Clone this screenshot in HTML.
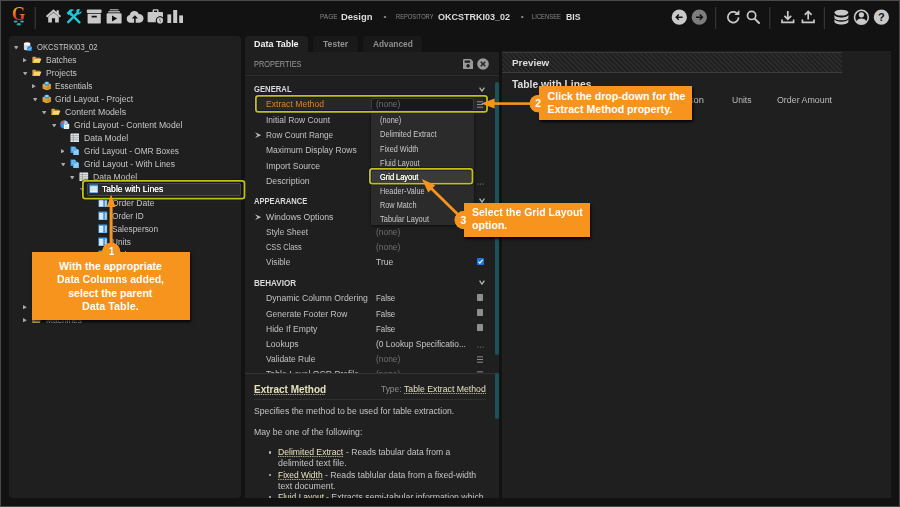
<!DOCTYPE html>
<html lang="en">
<head>
<meta charset="utf-8">
<title>Design - Data Table Extract Method</title>
<style>
*{box-sizing:border-box;margin:0;padding:0}
html,body{width:900px;height:507px;overflow:hidden;background:#121212}
body{position:relative;font-family:"Liberation Sans",sans-serif;color:#c4c4c4;font-size:9px}
.abs{position:absolute}
.t{position:absolute;white-space:nowrap;transform-origin:0 50%}
#frame{position:absolute;left:0;top:0;width:900px;height:507px;border:1px solid #4a4a4a;z-index:50;pointer-events:none}
.panel{position:absolute;background:#1f1f1f}
.ic{position:absolute}
.tb-s{font-size:6.4px;line-height:10px;color:#8a8a8a;white-space:nowrap}
.tb-b{font-size:9.6px;line-height:12px;font-weight:bold;color:#dcdcdc;white-space:nowrap}
.tb-d{font-size:10px;line-height:12px;color:#888}
.callout{position:absolute;background:#f7941d;box-shadow:1px 2px 2.5px rgba(0,0,0,.85)}
.ul{border-bottom:1px dotted #cfcba6}
</style>
</head>
<body>
<div id="topbar" class="abs" style="left:0;top:0;width:900px;height:35px;background:#121212">
<svg class="abs" style="left:0;top:0" width="900" height="35" viewBox="0 0 900 35">
<!-- logo drops -->
<g fill="#12b5a6">
<ellipse cx="15.6" cy="21.6" rx="2" ry="1.1"/><ellipse cx="22" cy="21.6" rx="2" ry="1.1"/><ellipse cx="18.8" cy="24.2" rx="2" ry="1.2"/>
</g>
<rect x="34.6" y="7" width="1.3" height="22" fill="#3a3630"/>
<!-- home -->
<g fill="#c9c9c9">
<path d="M53.5 9.2 L45.9 15.9 L47.2 17.4 L53.5 11.9 L59.8 17.4 L61.1 15.9 L58.8 13.9 V10.2 H56.6 V11.9 Z"/>
<path d="M48.2 16.8 L53.5 12.4 L58.8 16.8 V22.6 H55.1 V18.2 H51.9 V22.6 H48.2 Z"/>
</g>
<!-- tools -->
<g stroke="#21c6d6" stroke-width="2.4" stroke-linecap="round" fill="none">
<path d="M68.2 22.2 L78.2 12.2"/>
<path d="M79.4 22.3 L71.5 14.4"/>
</g>
<g fill="#21c6d6">
<path d="M76.2 10.2 a3.2 3.2 0 0 1 4.2 -0.6 l-2.2 2.2 l1.2 1.2 l2.2 -2.2 a3.2 3.2 0 0 1 -4.4 3.4 Z"/>
<path d="M66.6 13 l3.4 -3.4 q2.6 -0.8 4.4 0.8 l-2.2 0.4 l-0.8 1.6 l1.6 1.6 l-2 2 l-1.6 -1.6 l-0.8 0.8 Z"/>
</g>
<!-- archive -->
<g fill="#c9c9c9">
<rect x="86.8" y="9.6" width="14.8" height="3.4" rx="1"/>
<path d="M87.6 13.8 H100.8 V22.4 a1.2 1.2 0 0 1 -1.2 1.2 H88.8 a1.2 1.2 0 0 1 -1.2 -1.2 Z M91.6 15.8 V17.4 H96.8 V15.8 Z" fill-rule="evenodd"/>
</g>
<!-- play box -->
<g fill="#c9c9c9">
<rect x="109.6" y="9" width="9" height="1.4" rx=".5" fill="#8e8e8e"/>
<rect x="108.2" y="11" width="11.8" height="1.6" rx=".5" fill="#a9a9a9"/>
<path d="M107.8 13.2 H120.4 a1.2 1.2 0 0 1 1.2 1.2 V22.4 a1.2 1.2 0 0 1 -1.2 1.2 H107.8 a1.2 1.2 0 0 1 -1.2 -1.2 V14.4 a1.2 1.2 0 0 1 1.2 -1.2 Z M112 15.4 V21.6 L117.2 18.5 Z" fill-rule="evenodd"/>
</g>
<!-- cloud upload -->
<path fill="#c9c9c9" fill-rule="evenodd" d="M130.4 22.8 a3.9 3.9 0 0 1 -0.6 -7.7 a4.6 4.6 0 0 1 8.9 -1.1 a4.2 4.2 0 0 1 0.8 8.8 Z M134.1 22.8 V18.6 H131.8 L134.9 15.2 L138 18.6 H135.7 V22.8 Z"/>
<!-- briefcase clock -->
<g fill="#c9c9c9">
<path fill-rule="evenodd" d="M152.6 12 V10.4 a1.2 1.2 0 0 1 1.2 -1.2 H157.4 a1.2 1.2 0 0 1 1.2 1.2 V12 H162 a1 1 0 0 1 1 1 V17.4 a4.4 4.4 0 0 0 -7 4.8 H148.6 a1 1 0 0 1 -1 -1 V13 a1 1 0 0 1 1 -1 Z M154 12 H157.2 V10.6 H154 Z"/>
<circle cx="160" cy="20.4" r="3.9" fill="#121212"/><circle cx="160" cy="20.4" r="3.1"/>
</g>
<path d="M159.8 18.6 V20.6 L161 21.6" stroke="#444" stroke-width=".8" fill="none"/>
<!-- bars -->
<g fill="#c9c9c9">
<rect x="167.4" y="14.4" width="3.8" height="8.6"/><rect x="173.2" y="10" width="4" height="13"/><rect x="179.2" y="15.4" width="3.8" height="7.6"/>
</g>
<!-- right icons -->
<circle cx="679.3" cy="17.2" r="7.6" fill="#c9c9c9"/>
<path d="M682.6 17.2 H676.4 M678.8 14.6 L676.2 17.2 L678.8 19.8" stroke="#121212" stroke-width="1.4" fill="none"/>
<circle cx="699.3" cy="17.2" r="7.6" fill="#7d7d7d"/>
<path d="M696 17.2 H702.2 M699.8 14.6 L702.4 17.2 L699.8 19.8" stroke="#121212" stroke-width="1.4" fill="none"/>
<rect x="715" y="7" width="1.2" height="22" fill="#353535"/>
<!-- refresh -->
<path d="M738.6 17.4 a5.4 5.4 0 1 1 -2 -4.4" stroke="#c9c9c9" stroke-width="1.7" fill="none"/>
<path d="M734.4 15 H739.4 V10 Z" fill="#c9c9c9"/>
<!-- search -->
<circle cx="751.6" cy="15.4" r="4.1" stroke="#c9c9c9" stroke-width="1.7" fill="none"/>
<path d="M754.6 18.6 L759 23" stroke="#c9c9c9" stroke-width="2" stroke-linecap="round"/>
<rect x="769.2" y="7" width="1.2" height="22" fill="#353535"/>
<!-- download -->
<g stroke="#c9c9c9" stroke-width="1.7" fill="none">
<path d="M787.8 11 V19 M784.4 15.8 L787.8 19.2 L791.2 15.8"/>
<path d="M782 19.4 V22.4 H793.6 V19.4"/>
<path d="M808.2 19.4 V11.6 M804.8 14.8 L808.2 11.4 L811.6 14.8"/>
<path d="M802.4 19.4 V22.4 H814 V19.4"/>
</g>
<rect x="823.8" y="7" width="1.2" height="22" fill="#353535"/>
<!-- database -->
<g fill="#c9c9c9">
<ellipse cx="841.4" cy="12.6" rx="7" ry="2.9"/>
<path d="M834.4 14.6 c0 3.9 14 3.9 14 0 v2.8 c0 3.9 -14 3.9 -14 0 Z"/>
<path d="M834.4 18.8 c0 3.9 14 3.9 14 0 v2.8 c0 3.9 -14 3.9 -14 0 Z"/>
</g>
<!-- user -->
<circle cx="861.4" cy="17.2" r="6.9" stroke="#c9c9c9" stroke-width="1.6" fill="none"/>
<circle cx="861.4" cy="14.8" r="2.6" fill="#c9c9c9"/>
<path d="M856.4 21.6 a5.2 4.4 0 0 1 10 0 a6.6 6.6 0 0 1 -10 0 Z" fill="#c9c9c9"/>
<!-- help -->
<circle cx="881.4" cy="17.2" r="7.6" fill="#c9c9c9"/>
</svg>
<div class="abs" style="left:12px;top:5.2px;width:15px;font-family:'Liberation Serif',serif;font-size:18px;line-height:18px;font-weight:bold;color:#ef5a22;background:linear-gradient(#f0a010 22%,#f06a1e 50%,#e8202a 82%);-webkit-background-clip:text;background-clip:text;-webkit-text-fill-color:transparent;transform:scaleX(.95);transform-origin:0 50%">G</div>
<div class="abs" style="left:877.4px;top:11px;width:8px;text-align:center;font-size:11px;line-height:12px;font-weight:bold;color:#121212">?</div>

<span class="t" style="left:320.0px;top:12.1px;font-size:6.4px;line-height:10px;color:#8a8a8a;transform:scaleX(1.013);">PAGE</span>
<span class="t" style="left:341.0px;top:11.0px;font-size:9.6px;line-height:12px;font-weight:bold;color:#dcdcdc;transform:scaleX(0.985);">Design</span>
<span class="t" style="left:383.3px;top:10.5px;font-size:12px;line-height:12px;font-weight:bold;color:#999;">·</span>
<span class="t" style="left:396.0px;top:12.1px;font-size:6.4px;line-height:10px;color:#8a8a8a;transform:scaleX(0.900);">REPOSITORY</span>
<span class="t" style="left:438.0px;top:11.0px;font-size:9.6px;line-height:12px;font-weight:bold;color:#dcdcdc;transform:scaleX(0.938);">OKCSTRKI03_02</span>
<span class="t" style="left:520.6px;top:10.5px;font-size:12px;line-height:12px;font-weight:bold;color:#999;">·</span>
<span class="t" style="left:532.0px;top:12.1px;font-size:6.4px;line-height:10px;color:#8a8a8a;transform:scaleX(0.917);">LICENSEE</span>
<span class="t" style="left:566.0px;top:11.0px;font-size:9.6px;line-height:12px;font-weight:bold;color:#dcdcdc;transform:scaleX(0.907);">BIS</span>
</div>
<div id="tree" class="panel" style="left:9.3px;top:35.5px;width:231.4px;height:462px;border-radius:4px">
<div class="abs" style="left:77.4px;top:147.5px;width:154px;height:12.6px;background:#2c2c2c;border:1px solid #484848;border-radius:2px"></div>
<svg class="ic" style="left:4.8px;top:10.0px" width="4.4" height="3.6" viewBox="0 0 44 36"><path d="M0 0 H44 L22 36 Z" fill="#a9a9a9"/></svg>
<svg class="ic" style="left:13.5px;top:6.3px" width="9.6" height="9.6" viewBox="0 0 10 10"><path d="M1 1.6 C1 0.2 7.6 0.2 7.6 1.6 V7.6 C7.6 9 1 9 1 7.6 Z" fill="#e4e7ec"/><ellipse cx="4.3" cy="1.7" rx="3.3" ry="1.1" fill="#f8f9fb"/><path d="M1 3.6 C1 4.9 7.6 4.9 7.6 3.6 M1 5.6 C1 6.9 7.6 6.9 7.6 5.6" stroke="#aab0bb" stroke-width=".5" fill="none"/><circle cx="6.9" cy="6.9" r="2.7" fill="#2b8fe6"/><path d="M5.7 6.9 L6.6 7.9 L8.3 5.9" stroke="#cfe6fb" stroke-width=".8" fill="none"/></svg>
<span class="t" style="left:27.3px;top:5.1px;font-size:9.7px;line-height:12px;color:#c6c6c6;transform:scaleX(0.790);">OKCSTRKI03_02</span>
<svg class="ic" style="left:13.7px;top:22.4px" width="3.8" height="4.4" viewBox="0 0 38 44"><path d="M0 0 V44 L38 22 Z" fill="#a9a9a9"/></svg>
<svg class="ic" style="left:22.9px;top:19.3px" width="9.6" height="9.6" viewBox="0 0 10 10"><path d="M0.4 2.4 a.6 .6 0 0 1 .6 -.6 H3.6 L4.5 2.8 H8.2 a.6 .6 0 0 1 .6 .6 V4 H2.6 L0.4 8 Z" fill="#e2a72c"/><path d="M2.4 4 H9.8 L8 8.4 H0.5 Z" fill="#f9d673"/><path d="M0.5 8.4 H8 L8.3 7.6 H0.9 Z" fill="#eab73e"/></svg>
<span class="t" style="left:36.7px;top:18.1px;font-size:9.7px;line-height:12px;color:#c6c6c6;transform:scaleX(0.874);">Batches</span>
<svg class="ic" style="left:14.2px;top:36.0px" width="4.4" height="3.6" viewBox="0 0 44 36"><path d="M0 0 H44 L22 36 Z" fill="#a9a9a9"/></svg>
<svg class="ic" style="left:22.9px;top:32.3px" width="9.6" height="9.6" viewBox="0 0 10 10"><path d="M0.4 2.4 a.6 .6 0 0 1 .6 -.6 H3.6 L4.5 2.8 H8.2 a.6 .6 0 0 1 .6 .6 V4 H2.6 L0.4 8 Z" fill="#e2a72c"/><path d="M2.4 4 H9.8 L8 8.4 H0.5 Z" fill="#f9d673"/><path d="M0.5 8.4 H8 L8.3 7.6 H0.9 Z" fill="#eab73e"/></svg>
<span class="t" style="left:36.7px;top:31.1px;font-size:9.7px;line-height:12px;color:#c6c6c6;transform:scaleX(0.883);">Projects</span>
<svg class="ic" style="left:23.1px;top:48.4px" width="3.8" height="4.4" viewBox="0 0 38 44"><path d="M0 0 V44 L38 22 Z" fill="#a9a9a9"/></svg>
<svg class="ic" style="left:32.3px;top:45.3px" width="9.6" height="9.6" viewBox="0 0 10 10"><path d="M0.6 3.4 L5 1.8 L9.4 3.4 V7.8 L5 9.8 L0.6 7.8 Z" fill="#eaa832"/><path d="M5 5.2 V9.8 L9.4 7.8 V3.4 Z" fill="#d99624"/><path d="M0.6 5.4 L5 7.2 L9.4 5.4 V6.3 L5 8.1 L0.6 6.3 Z" fill="#c07d14" opacity=".6"/><ellipse cx="5" cy="2.7" rx="2.7" ry="2.3" fill="#2f97e6"/><ellipse cx="5" cy="2.2" rx="1.6" ry="1.1" fill="#8fd3fa"/></svg>
<span class="t" style="left:46.1px;top:44.1px;font-size:9.7px;line-height:12px;color:#c6c6c6;transform:scaleX(0.845);">Essentials</span>
<svg class="ic" style="left:23.6px;top:62.0px" width="4.4" height="3.6" viewBox="0 0 44 36"><path d="M0 0 H44 L22 36 Z" fill="#a9a9a9"/></svg>
<svg class="ic" style="left:32.3px;top:58.3px" width="9.6" height="9.6" viewBox="0 0 10 10"><path d="M0.6 3.4 L5 1.8 L9.4 3.4 V7.8 L5 9.8 L0.6 7.8 Z" fill="#eaa832"/><path d="M5 5.2 V9.8 L9.4 7.8 V3.4 Z" fill="#d99624"/><path d="M0.6 5.4 L5 7.2 L9.4 5.4 V6.3 L5 8.1 L0.6 6.3 Z" fill="#c07d14" opacity=".6"/><ellipse cx="5" cy="2.7" rx="2.7" ry="2.3" fill="#2f97e6"/><ellipse cx="5" cy="2.2" rx="1.6" ry="1.1" fill="#8fd3fa"/></svg>
<span class="t" style="left:46.1px;top:57.1px;font-size:9.7px;line-height:12px;color:#c6c6c6;transform:scaleX(0.878);">Grid Layout - Project</span>
<svg class="ic" style="left:33.0px;top:75.0px" width="4.4" height="3.6" viewBox="0 0 44 36"><path d="M0 0 H44 L22 36 Z" fill="#a9a9a9"/></svg>
<svg class="ic" style="left:41.7px;top:71.3px" width="9.6" height="9.6" viewBox="0 0 10 10"><path d="M0.4 2.4 a.6 .6 0 0 1 .6 -.6 H3.6 L4.5 2.8 H8.2 a.6 .6 0 0 1 .6 .6 V4 H2.6 L0.4 8 Z" fill="#e2a72c"/><path d="M2.4 4 H9.8 L8 8.4 H0.5 Z" fill="#f9d673"/><path d="M0.5 8.4 H8 L8.3 7.6 H0.9 Z" fill="#eab73e"/></svg>
<span class="t" style="left:55.5px;top:70.1px;font-size:9.7px;line-height:12px;color:#c6c6c6;transform:scaleX(0.899);">Content Models</span>
<svg class="ic" style="left:42.4px;top:88.0px" width="4.4" height="3.6" viewBox="0 0 44 36"><path d="M0 0 H44 L22 36 Z" fill="#a9a9a9"/></svg>
<svg class="ic" style="left:51.1px;top:84.3px" width="9.6" height="9.6" viewBox="0 0 10 10"><circle cx="4.4" cy="4.6" r="4.2" fill="#2d8fe0"/><path d="M4.4 4.6 L4.4 0.4 A4.2 4.2 0 0 1 8.4 3.4 Z" fill="#9fd3f6"/><path d="M4.4 4.6 L1 2.2 A4.2 4.2 0 0 1 4.2 0.4 Z" fill="#e8534a"/><rect x="4" y="4" width="5.6" height="5.4" rx=".8" fill="#f2f4f7"/><path d="M4 5.6 L6 4 L8 4.8 Z" fill="#7ac17a"/><path d="M5 7 H8.6 M5 8.2 H8.6" stroke="#c3c9d2" stroke-width=".5"/></svg>
<span class="t" style="left:64.9px;top:83.1px;font-size:9.7px;line-height:12px;color:#c6c6c6;transform:scaleX(0.891);">Grid Layout - Content Model</span>

<svg class="ic" style="left:60.5px;top:97.3px" width="9.6" height="9.6" viewBox="0 0 10 10"><rect x="0.5" y="0.5" width="9" height="9" rx=".5" fill="#eceef1"/><path d="M0.5 2.8 H9.5 M0.5 5 H9.5 M0.5 7.2 H9.5 M3.4 0.5 V9.5" stroke="#858b93" stroke-width=".75"/><path d="M6.4 0.5 V9.5" stroke="#b4b9c0" stroke-width=".5"/></svg>
<span class="t" style="left:74.3px;top:96.1px;font-size:9.7px;line-height:12px;color:#c6c6c6;transform:scaleX(0.890);">Data Model</span>
<svg class="ic" style="left:51.3px;top:113.4px" width="3.8" height="4.4" viewBox="0 0 38 44"><path d="M0 0 V44 L38 22 Z" fill="#a9a9a9"/></svg>
<svg class="ic" style="left:60.5px;top:110.3px" width="9.6" height="9.6" viewBox="0 0 10 10"><path d="M0.6 0.4 H5.2 L6.8 2 V7.2 H0.6 Z" fill="#3b9be6"/><path d="M1.6 1.8 H5 M1.6 3.2 H5.6 M1.6 4.6 H5.6" stroke="#bfe1fa" stroke-width=".6"/><path d="M3.2 3 H7.8 L9.6 4.8 V9.8 H3.2 Z" fill="#5fb4f0"/><path d="M7.8 3 V4.8 H9.6 Z" fill="#d6ecfc"/><path d="M4.2 5.6 H8.4 M4.2 7 H8.4 M4.2 8.4 H8.4" stroke="#d9effd" stroke-width=".6"/></svg>
<span class="t" style="left:74.3px;top:109.1px;font-size:9.7px;line-height:12px;color:#c6c6c6;transform:scaleX(0.856);">Grid Layout - OMR Boxes</span>
<svg class="ic" style="left:51.8px;top:127.0px" width="4.4" height="3.6" viewBox="0 0 44 36"><path d="M0 0 H44 L22 36 Z" fill="#a9a9a9"/></svg>
<svg class="ic" style="left:60.5px;top:123.3px" width="9.6" height="9.6" viewBox="0 0 10 10"><path d="M0.6 0.4 H5.2 L6.8 2 V7.2 H0.6 Z" fill="#3b9be6"/><path d="M1.6 1.8 H5 M1.6 3.2 H5.6 M1.6 4.6 H5.6" stroke="#bfe1fa" stroke-width=".6"/><path d="M3.2 3 H7.8 L9.6 4.8 V9.8 H3.2 Z" fill="#5fb4f0"/><path d="M7.8 3 V4.8 H9.6 Z" fill="#d6ecfc"/><path d="M4.2 5.6 H8.4 M4.2 7 H8.4 M4.2 8.4 H8.4" stroke="#d9effd" stroke-width=".6"/></svg>
<span class="t" style="left:74.3px;top:122.1px;font-size:9.7px;line-height:12px;color:#c6c6c6;transform:scaleX(0.876);">Grid Layout - With Lines</span>
<svg class="ic" style="left:61.2px;top:140.0px" width="4.4" height="3.6" viewBox="0 0 44 36"><path d="M0 0 H44 L22 36 Z" fill="#a9a9a9"/></svg>
<svg class="ic" style="left:69.9px;top:136.3px" width="9.6" height="9.6" viewBox="0 0 10 10"><rect x="0.5" y="0.5" width="9" height="9" rx=".5" fill="#eceef1"/><path d="M0.5 2.8 H9.5 M0.5 5 H9.5 M0.5 7.2 H9.5 M3.4 0.5 V9.5" stroke="#858b93" stroke-width=".75"/><path d="M6.4 0.5 V9.5" stroke="#b4b9c0" stroke-width=".5"/></svg>
<span class="t" style="left:83.7px;top:135.1px;font-size:9.7px;line-height:12px;color:#c6c6c6;transform:scaleX(0.890);">Data Model</span>
<svg class="ic" style="left:70.6px;top:152.5px" width="4.4" height="3.6" viewBox="0 0 44 36"><path d="M0 0 H44 L22 36 Z" fill="#a9a9a9"/></svg>
<svg class="ic" style="left:79.3px;top:148.8px" width="9.6" height="9.6" viewBox="0 0 10 10"><rect x="0.4" y="0.6" width="9.2" height="8.8" rx=".6" fill="#3f9ee6"/><rect x="1.2" y="2.4" width="7.6" height="6.2" fill="#f3f6ee"/><path d="M1.2 4.3 H8.8 M1.2 6.3 H8.8" stroke="#9cc7e6" stroke-width=".6"/><path d="M3.4 2.4 V8.6" stroke="#c5dced" stroke-width=".5"/></svg>
<span class="t" style="left:93.1px;top:147.6px;font-size:9.7px;line-height:12px;color:#ffffff;transform:scaleX(0.889);text-shadow:0 0 .5px #fff;">Table with Lines</span>

<svg class="ic" style="left:88.7px;top:162.3px" width="9.6" height="9.6" viewBox="0 0 10 10"><rect x="0.4" y="0.6" width="9.2" height="9" rx=".6" fill="#3f9ee6"/><rect x="1.2" y="2" width="7.6" height="6.8" fill="#f2f5f8"/><rect x="5.4" y="2" width="2.2" height="6.8" fill="#2f86d8"/><path d="M1.2 3.8 H8.8 M1.2 5.4 H8.8 M1.2 7 H8.8" stroke="#a9cdea" stroke-width=".5"/></svg>
<span class="t" style="left:102.5px;top:161.1px;font-size:9.7px;line-height:12px;color:#c6c6c6;transform:scaleX(0.885);">Order Date</span>

<svg class="ic" style="left:88.7px;top:175.3px" width="9.6" height="9.6" viewBox="0 0 10 10"><rect x="0.4" y="0.6" width="9.2" height="9" rx=".6" fill="#3f9ee6"/><rect x="1.2" y="2" width="7.6" height="6.8" fill="#f2f5f8"/><rect x="5.4" y="2" width="2.2" height="6.8" fill="#2f86d8"/><path d="M1.2 3.8 H8.8 M1.2 5.4 H8.8 M1.2 7 H8.8" stroke="#a9cdea" stroke-width=".5"/></svg>
<span class="t" style="left:102.5px;top:174.1px;font-size:9.7px;line-height:12px;color:#c6c6c6;transform:scaleX(0.851);">Order ID</span>

<svg class="ic" style="left:88.7px;top:188.3px" width="9.6" height="9.6" viewBox="0 0 10 10"><rect x="0.4" y="0.6" width="9.2" height="9" rx=".6" fill="#3f9ee6"/><rect x="1.2" y="2" width="7.6" height="6.8" fill="#f2f5f8"/><rect x="5.4" y="2" width="2.2" height="6.8" fill="#2f86d8"/><path d="M1.2 3.8 H8.8 M1.2 5.4 H8.8 M1.2 7 H8.8" stroke="#a9cdea" stroke-width=".5"/></svg>
<span class="t" style="left:102.5px;top:187.1px;font-size:9.7px;line-height:12px;color:#c6c6c6;transform:scaleX(0.854);">Salesperson</span>

<svg class="ic" style="left:88.7px;top:201.3px" width="9.6" height="9.6" viewBox="0 0 10 10"><rect x="0.4" y="0.6" width="9.2" height="9" rx=".6" fill="#3f9ee6"/><rect x="1.2" y="2" width="7.6" height="6.8" fill="#f2f5f8"/><rect x="5.4" y="2" width="2.2" height="6.8" fill="#2f86d8"/><path d="M1.2 3.8 H8.8 M1.2 5.4 H8.8 M1.2 7 H8.8" stroke="#a9cdea" stroke-width=".5"/></svg>
<span class="t" style="left:102.5px;top:200.1px;font-size:9.7px;line-height:12px;color:#c6c6c6;transform:scaleX(0.852);">Units</span>

<svg class="ic" style="left:88.7px;top:214.3px" width="9.6" height="9.6" viewBox="0 0 10 10"><rect x="0.4" y="0.6" width="9.2" height="9" rx=".6" fill="#3f9ee6"/><rect x="1.2" y="2" width="7.6" height="6.8" fill="#f2f5f8"/><rect x="5.4" y="2" width="2.2" height="6.8" fill="#2f86d8"/><path d="M1.2 3.8 H8.8 M1.2 5.4 H8.8 M1.2 7 H8.8" stroke="#a9cdea" stroke-width=".5"/></svg>
<span class="t" style="left:102.5px;top:213.1px;font-size:9.7px;line-height:12px;color:#c6c6c6;transform:scaleX(0.904);">Order Amount</span>
<svg class="ic" style="left:13.7px;top:269.4px" width="3.8" height="4.4" viewBox="0 0 38 44"><path d="M0 0 V44 L38 22 Z" fill="#a9a9a9"/></svg>
<svg class="ic" style="left:22.9px;top:266.3px" width="9.6" height="9.6" viewBox="0 0 10 10"><path d="M0.4 2.4 a.6 .6 0 0 1 .6 -.6 H3.6 L4.5 2.8 H8.2 a.6 .6 0 0 1 .6 .6 V4 H2.6 L0.4 8 Z" fill="#e2a72c"/><path d="M2.4 4 H9.8 L8 8.4 H0.5 Z" fill="#f9d673"/><path d="M0.5 8.4 H8 L8.3 7.6 H0.9 Z" fill="#eab73e"/></svg>
<span class="t" style="left:36.7px;top:265.1px;font-size:9.7px;line-height:12px;color:#c6c6c6;transform:scaleX(0.911);">Infrastructure</span>
<svg class="ic" style="left:13.7px;top:282.4px" width="3.8" height="4.4" viewBox="0 0 38 44"><path d="M0 0 V44 L38 22 Z" fill="#a9a9a9"/></svg>
<svg class="ic" style="left:22.9px;top:279.3px" width="9.6" height="9.6" viewBox="0 0 10 10"><path d="M0.4 2.4 a.6 .6 0 0 1 .6 -.6 H3.6 L4.5 2.8 H8.2 a.6 .6 0 0 1 .6 .6 V4 H2.6 L0.4 8 Z" fill="#e2a72c"/><path d="M2.4 4 H9.8 L8 8.4 H0.5 Z" fill="#f9d673"/><path d="M0.5 8.4 H8 L8.3 7.6 H0.9 Z" fill="#eab73e"/></svg>
<span class="t" style="left:36.7px;top:278.1px;font-size:9.7px;line-height:12px;color:#c6c6c6;transform:scaleX(0.868);">Machines</span>
</div>
<div class="abs" style="left:245px;top:35.5px;width:63.3px;height:17px;background:#1f1f1f;border-radius:4px 4px 0 0"></div>
<div class="abs" style="left:312.9px;top:35.5px;width:45.3px;height:16.2px;background:#191919;border-radius:4px 4px 0 0"></div>
<div class="abs" style="left:363.3px;top:35.5px;width:58.5px;height:16.2px;background:#191919;border-radius:4px 4px 0 0"></div>
<span class="t" style="left:254.4px;top:38.3px;font-size:9.6px;line-height:12px;font-weight:bold;color:#f2f2f2;transform:scaleX(0.933);">Data Table</span>
<span class="t" style="left:322.9px;top:38.3px;font-size:9.6px;line-height:12px;font-weight:bold;color:#8f8f8f;transform:scaleX(0.897);">Tester</span>
<span class="t" style="left:372.9px;top:38.3px;font-size:9.6px;line-height:12px;font-weight:bold;color:#8f8f8f;transform:scaleX(0.868);">Advanced</span>
<div id="mid" class="panel" style="left:245px;top:52px;width:254px;height:445.5px;overflow:hidden">
<span class="t" style="left:9.4px;top:6.3px;font-size:9.4px;line-height:12px;color:#9b9b9b;transform:scaleX(0.788);">PROPERTIES</span>
<svg class="ic" style="left:218.3px;top:6.799999999999997px" width="10.2" height="10.2" viewBox="0 0 10 10"><path fill="#9a9a9a" fill-rule="evenodd" d="M1.2 0 H7.6 L10 2.4 V8.8 a1.2 1.2 0 0 1 -1.2 1.2 H1.2 A1.2 1.2 0 0 1 0 8.8 V1.2 A1.2 1.2 0 0 1 1.2 0 Z M1.6 1.4 V3.6 H7 V1.4 Z M5 5 a1.7 1.7 0 1 0 .01 0 Z"/></svg>
<svg class="ic" style="left:231.8px;top:5.899999999999999px" width="12" height="12" viewBox="0 0 12 12"><circle cx="6" cy="6" r="5.8" fill="#9a9a9a"/><path d="M3.7 3.7 L8.3 8.3 M8.3 3.7 L3.7 8.3" stroke="#1f1f1f" stroke-width="1.4"/></svg>
<div class="abs" style="left:0;top:23.200000000000003px;width:254px;height:1px;background:#2d2d2d"></div>
<span class="t" style="left:9.3px;top:31.4px;font-size:9.6px;line-height:12px;font-weight:bold;color:#d9d9d9;transform:scaleX(0.802);">GENERAL</span>
<svg class="ic" style="left:233.60000000000002px;top:34.8px" width="6" height="5" viewBox="0 0 64 54"><path d="M6 6 L32 44 L58 6" stroke="#b5b5b5" stroke-width="14" fill="none"/></svg>
<div class="abs" style="left:12px;top:45.400000000000006px;width:229px;height:14px;background:#272727"></div>
<div class="abs" style="left:126px;top:45.7px;width:102.5px;height:13px;background:#191919;border:1px solid #3a3a3a;border-radius:2px"></div>
<span class="t" style="left:20.6px;top:46.4px;font-size:9.7px;line-height:12px;color:#df8327;transform:scaleX(0.890);">Extract Method</span>
<span class="t" style="left:130.6px;top:46.4px;font-size:9.7px;line-height:12px;color:#6f6f6f;transform:scaleX(0.868);">(none)</span>
<svg class="ic" style="left:231.60000000000002px;top:49.1px" width="6.6" height="7" viewBox="0 0 66 70"><path d="M0 8 H66 M0 35 H66 M0 62 H66" stroke="#9a9a9a" stroke-width="9"/></svg>
<span class="t" style="left:20.6px;top:62.0px;font-size:9.7px;line-height:12px;color:#c2c2c2;transform:scaleX(0.875);">Initial Row Count</span>
<span class="t" style="left:130.6px;top:62.0px;font-size:9.7px;line-height:12px;color:#6f6f6f;transform:scaleX(0.868);">(none)</span>
<svg class="ic" style="left:9.599999999999994px;top:80.0px" width="6.4" height="6.4" viewBox="0 0 64 64"><path d="M0 3 L64 32 L0 61 L24 32 Z" fill="#b8b8b8"/></svg>
<span class="t" style="left:20.6px;top:77.0px;font-size:9.7px;line-height:12px;color:#c2c2c2;transform:scaleX(0.848);">Row Count Range</span>
<span class="t" style="left:20.6px;top:92.1px;font-size:9.7px;line-height:12px;color:#c2c2c2;transform:scaleX(0.877);">Maximum Display Rows</span>
<span class="t" style="left:20.6px;top:107.6px;font-size:9.7px;line-height:12px;color:#c2c2c2;transform:scaleX(0.888);">Import Source</span>
<span class="t" style="left:20.6px;top:123.0px;font-size:9.7px;line-height:12px;color:#c2c2c2;transform:scaleX(0.900);">Description</span>
<svg class="ic" style="left:231.60000000000002px;top:130.8px" width="7" height="2" viewBox="0 0 70 20"><circle cx="10" cy="10" r="6" fill="#8c8c8c"/><circle cx="35" cy="10" r="6" fill="#8c8c8c"/><circle cx="60" cy="10" r="6" fill="#8c8c8c"/></svg>
<span class="t" style="left:9.3px;top:143.0px;font-size:9.6px;line-height:12px;font-weight:bold;color:#d9d9d9;transform:scaleX(0.792);">APPEARANCE</span>
<svg class="ic" style="left:233.60000000000002px;top:146.4px" width="6" height="5" viewBox="0 0 64 54"><path d="M6 6 L32 44 L58 6" stroke="#b5b5b5" stroke-width="14" fill="none"/></svg>
<svg class="ic" style="left:9.599999999999994px;top:161.7px" width="6.4" height="6.4" viewBox="0 0 64 64"><path d="M0 3 L64 32 L0 61 L24 32 Z" fill="#b8b8b8"/></svg>
<span class="t" style="left:20.6px;top:158.7px;font-size:9.7px;line-height:12px;color:#c2c2c2;transform:scaleX(0.894);">Windows Options</span>
<span class="t" style="left:20.6px;top:174.0px;font-size:9.7px;line-height:12px;color:#c2c2c2;transform:scaleX(0.848);">Style Sheet</span>
<span class="t" style="left:130.6px;top:174.0px;font-size:9.7px;line-height:12px;color:#6f6f6f;transform:scaleX(0.868);">(none)</span>
<span class="t" style="left:20.6px;top:189.4px;font-size:9.7px;line-height:12px;color:#c2c2c2;transform:scaleX(0.760);">CSS Class</span>
<span class="t" style="left:130.6px;top:189.4px;font-size:9.7px;line-height:12px;color:#6f6f6f;transform:scaleX(0.868);">(none)</span>
<span class="t" style="left:20.6px;top:204.4px;font-size:9.7px;line-height:12px;color:#c2c2c2;transform:scaleX(0.857);">Visible</span>
<span class="t" style="left:130.6px;top:204.4px;font-size:9.7px;line-height:12px;color:#c8c8c8;transform:scaleX(0.879);">True</span>
<svg class="ic" style="left:231.60000000000002px;top:205.8px" width="7" height="7" viewBox="0 0 70 70"><rect width="70" height="70" rx="10" fill="#1a73e8"/><path d="M14 36 L29 51 L56 18" stroke="#fff" stroke-width="11" fill="none"/></svg>
<span class="t" style="left:9.3px;top:224.6px;font-size:9.6px;line-height:12px;font-weight:bold;color:#d9d9d9;transform:scaleX(0.841);">BEHAVIOR</span>
<svg class="ic" style="left:233.60000000000002px;top:228.0px" width="6" height="5" viewBox="0 0 64 54"><path d="M6 6 L32 44 L58 6" stroke="#b5b5b5" stroke-width="14" fill="none"/></svg>
<span class="t" style="left:20.6px;top:240.4px;font-size:9.7px;line-height:12px;color:#c2c2c2;transform:scaleX(0.893);">Dynamic Column Ordering</span>
<span class="t" style="left:130.6px;top:240.4px;font-size:9.7px;line-height:12px;color:#c8c8c8;transform:scaleX(0.811);">False</span>
<div class="abs" style="left:231.8px;top:242.2px;width:6.6px;height:6.6px;background:#8e8e8e;border-radius:.8px"></div>
<span class="t" style="left:20.6px;top:255.7px;font-size:9.7px;line-height:12px;color:#c2c2c2;transform:scaleX(0.873);">Generate Footer Row</span>
<span class="t" style="left:130.6px;top:255.7px;font-size:9.7px;line-height:12px;color:#c8c8c8;transform:scaleX(0.811);">False</span>
<div class="abs" style="left:231.8px;top:257.4px;width:6.6px;height:6.6px;background:#8e8e8e;border-radius:.8px"></div>
<span class="t" style="left:20.6px;top:270.7px;font-size:9.7px;line-height:12px;color:#c2c2c2;transform:scaleX(0.882);">Hide If Empty</span>
<span class="t" style="left:130.6px;top:270.7px;font-size:9.7px;line-height:12px;color:#c8c8c8;transform:scaleX(0.811);">False</span>
<div class="abs" style="left:231.8px;top:272.4px;width:6.6px;height:6.6px;background:#8e8e8e;border-radius:.8px"></div>
<span class="t" style="left:20.6px;top:286.0px;font-size:9.7px;line-height:12px;color:#c2c2c2;transform:scaleX(0.890);">Lookups</span>
<span class="t" style="left:130.6px;top:286.0px;font-size:9.7px;line-height:12px;color:#c8c8c8;transform:scaleX(0.870);">(0 Lookup Specificatio...</span>
<svg class="ic" style="left:231.60000000000002px;top:293.8px" width="7" height="2" viewBox="0 0 70 20"><circle cx="10" cy="10" r="6" fill="#8c8c8c"/><circle cx="35" cy="10" r="6" fill="#8c8c8c"/><circle cx="60" cy="10" r="6" fill="#8c8c8c"/></svg>
<span class="t" style="left:20.6px;top:301.0px;font-size:9.7px;line-height:12px;color:#c2c2c2;transform:scaleX(0.868);">Validate Rule</span>
<span class="t" style="left:130.6px;top:301.0px;font-size:9.7px;line-height:12px;color:#6f6f6f;transform:scaleX(0.868);">(none)</span>
<svg class="ic" style="left:231.60000000000002px;top:303.5px" width="6.6" height="7" viewBox="0 0 66 70"><path d="M0 8 H66 M0 35 H66 M0 62 H66" stroke="#9a9a9a" stroke-width="9"/></svg>
<span class="t" style="left:20.6px;top:316.3px;font-size:9.7px;line-height:12px;color:#c2c2c2;transform:scaleX(0.895);">Table-Level OCR Profile</span>
<span class="t" style="left:130.6px;top:316.3px;font-size:9.7px;line-height:12px;color:#6f6f6f;transform:scaleX(0.868);">(none)</span>
<svg class="ic" style="left:231.60000000000002px;top:318.8px" width="6.6" height="7" viewBox="0 0 66 70"><path d="M0 8 H66 M0 35 H66 M0 62 H66" stroke="#9a9a9a" stroke-width="9"/></svg>
<div class="abs" style="left:249.89999999999998px;top:29.5px;width:4.2px;height:273.5px;background:#1d5256;border-radius:2.1px"></div>
<div class="abs" style="left:125.69999999999999px;top:60.599999999999994px;width:103.2px;height:112.8px;background:#2b2b2b;box-shadow:0 1px 3px rgba(0,0,0,.6)"></div>
<div class="abs" style="left:126px;top:118.19999999999999px;width:102.4px;height:13.4px;background:#3a3a3a"></div>
<span class="t" style="left:134.6px;top:62.2px;font-size:8.8px;line-height:12px;color:#c9c9c9;transform:scaleX(0.838);">(none)</span>
<span class="t" style="left:134.6px;top:76.3px;font-size:8.8px;line-height:12px;color:#c9c9c9;transform:scaleX(0.850);">Delimited Extract</span>
<span class="t" style="left:134.6px;top:90.5px;font-size:8.8px;line-height:12px;color:#c9c9c9;transform:scaleX(0.827);">Fixed Width</span>
<span class="t" style="left:134.6px;top:104.7px;font-size:8.8px;line-height:12px;color:#c9c9c9;transform:scaleX(0.826);">Fluid Layout</span>
<span class="t" style="left:134.6px;top:133.2px;font-size:8.8px;line-height:12px;color:#c9c9c9;transform:scaleX(0.830);">Header-Value</span>
<span class="t" style="left:134.6px;top:147.3px;font-size:8.8px;line-height:12px;color:#c9c9c9;transform:scaleX(0.830);">Row Match</span>
<span class="t" style="left:134.6px;top:161.3px;font-size:8.8px;line-height:12px;color:#c9c9c9;transform:scaleX(0.849);">Tabular Layout</span>
<span class="t" style="left:134.6px;top:119.2px;font-size:8.8px;line-height:12px;color:#ffffff;transform:scaleX(0.844);text-shadow:0 0 .5px #fff;">Grid Layout</span>
<div class="abs" style="left:0;top:320.6px;width:254px;height:130px;background:#202020;border-top:1px solid #333"></div>
<span class="t" style="left:8.9px;top:331.2px;font-size:11.2px;line-height:12px;font-weight:bold;color:#e6e2bf;transform:scaleX(0.893);text-decoration:underline dotted #d8d4ae;text-decoration-thickness:1px;text-underline-offset:.6px;">Extract Method</span>
<span class="t" style="left:135.9px;top:330.8px;font-size:9.7px;line-height:12px;color:#8d8d8d;transform:scaleX(0.865);">Type:</span>
<span class="t" style="left:158.5px;top:330.8px;font-size:9.7px;line-height:12px;color:#e6e2bf;transform:scaleX(0.899);text-decoration:underline dotted #d8d4ae;text-decoration-thickness:1px;text-underline-offset:.6px;">Table Extract Method</span>
<div class="abs" style="left:9px;top:347.3px;width:231.5px;height:1px;background:#303030"></div>
<span class="t" style="left:9.0px;top:352.9px;font-size:9.7px;line-height:12px;color:#c4c4c4;transform:scaleX(0.896);">Specifies the method to be used for table extraction.</span>
<span class="t" style="left:9.0px;top:373.9px;font-size:9.7px;line-height:12px;color:#c4c4c4;transform:scaleX(0.898);">May be one of the following:</span>
<div class="abs" style="left:23.899999999999977px;top:399.4px;width:2.4px;height:2.4px;border-radius:50%;background:#bdbdbd"></div>
<span class="t" style="left:32.5px;top:394.2px;font-size:9.7px;line-height:12px;color:#e6e2bf;transform:scaleX(0.891);text-decoration:underline dotted #d8d4ae;text-decoration-thickness:1px;text-underline-offset:.6px;">Delimited Extract</span>
<span class="t" style="left:100.6px;top:394.2px;font-size:9.7px;line-height:12px;color:#c4c4c4;transform:scaleX(0.885);">- Reads tabular data from a</span>
<span class="t" style="left:32.5px;top:404.9px;font-size:9.7px;line-height:12px;color:#c4c4c4;transform:scaleX(0.918);">delimited text file.</span>
<div class="abs" style="left:23.899999999999977px;top:422.0px;width:2.4px;height:2.4px;border-radius:50%;background:#bdbdbd"></div>
<span class="t" style="left:32.5px;top:416.8px;font-size:9.7px;line-height:12px;color:#e6e2bf;transform:scaleX(0.872);text-decoration:underline dotted #d8d4ae;text-decoration-thickness:1px;text-underline-offset:.6px;">Fixed Width</span>
<span class="t" style="left:80.0px;top:416.8px;font-size:9.7px;line-height:12px;color:#c4c4c4;transform:scaleX(0.894);">- Reads tablular data from a fixed-width</span>
<span class="t" style="left:32.5px;top:427.6px;font-size:9.7px;line-height:12px;color:#c4c4c4;transform:scaleX(0.905);">text document.</span>
<div class="abs" style="left:23.899999999999977px;top:444.0px;width:2.4px;height:2.4px;border-radius:50%;background:#bdbdbd"></div>
<span class="t" style="left:32.5px;top:438.8px;font-size:9.7px;line-height:12px;color:#e6e2bf;transform:scaleX(0.872);text-decoration:underline dotted #d8d4ae;text-decoration-thickness:1px;text-underline-offset:.6px;">Fluid Layout</span>
<span class="t" style="left:81.4px;top:438.8px;font-size:9.7px;line-height:12px;color:#c4c4c4;transform:scaleX(0.901);">- Extracts semi-tabular information which</span>
<div class="abs" style="left:249.89999999999998px;top:321.4px;width:4.2px;height:46px;background:#1d5256;border-radius:2.1px"></div>
</div>
<div id="prev" class="panel" style="left:502.2px;top:51px;width:388.8px;height:446.5px;overflow:hidden">
<div class="abs" style="left:0;top:1px;width:339.4px;height:21px;border-top:1px solid #383838;border-bottom:1px solid #3c3c3c;background:repeating-linear-gradient(45deg,#202020 0,#202020 1.4px,#2d2d2d 2px,#2d2d2d 2.9px,#202020 3.4px)"></div>
<span class="t" style="left:10.0px;top:5.7px;font-size:9.8px;line-height:12px;font-weight:bold;color:#dedede;transform:scaleX(1.007);">Preview</span>
<span class="t" style="left:10.0px;top:28.2px;font-size:10.2px;line-height:12px;font-weight:bold;color:#dedede;transform:scaleX(1.013);">Table with Lines</span>
<span class="t" style="left:57.8px;top:43.0px;font-size:9.7px;line-height:12px;color:#bdbdbd;transform:scaleX(0.885);">Order Date</span>
<span class="t" style="left:114.8px;top:43.0px;font-size:9.7px;line-height:12px;color:#bdbdbd;transform:scaleX(0.851);">Order ID</span>
<span class="t" style="left:149.8px;top:43.0px;font-size:9.7px;line-height:12px;color:#bdbdbd;transform:scaleX(0.966);">Salesperson</span>
<span class="t" style="left:230.3px;top:43.0px;font-size:9.7px;line-height:12px;color:#bdbdbd;transform:scaleX(0.884);">Units</span>
<span class="t" style="left:274.6px;top:43.0px;font-size:9.7px;line-height:12px;color:#bdbdbd;transform:scaleX(0.912);">Order Amount</span>
</div>
<svg class="abs" style="left:80.2px;top:177.8px" width="167.4" height="23.6"><rect x="2.90" y="2.90" width="161.60" height="17.80" rx="2.4" fill="none" stroke="rgba(8,8,40,.75)" stroke-width="3.0"/><rect x="2.90" y="2.90" width="161.60" height="17.80" rx="2.4" fill="none" stroke="#c2c214" stroke-width="1.8"/></svg>
<svg class="abs" style="left:253.0px;top:93.2px" width="236.9" height="21.7"><rect x="2.90" y="2.90" width="231.10" height="15.90" rx="2.4" fill="none" stroke="rgba(8,8,40,.75)" stroke-width="3.0"/><rect x="2.90" y="2.90" width="231.10" height="15.90" rx="2.4" fill="none" stroke="#c2c214" stroke-width="1.8"/></svg>
<svg class="abs" style="left:367.3px;top:166.4px" width="108.3" height="20.6"><rect x="2.90" y="2.90" width="102.50" height="14.80" rx="2.4" fill="none" stroke="rgba(8,8,40,.75)" stroke-width="3.0"/><rect x="2.90" y="2.90" width="102.50" height="14.80" rx="2.4" fill="none" stroke="#c2c214" stroke-width="1.8"/></svg>
<svg class="abs" style="left:0;top:0" width="900" height="507" viewBox="0 0 900 507">
<g fill="#f7941d" stroke="none">
<!-- arrow 1 (vertical) -->
<rect x="109.6" y="205" width="3" height="40"/>
<path d="M111.1 194.6 L115.5 207 L106.7 207 Z"/>
<circle cx="111.2" cy="252" r="9.2"/>
<!-- arrow 2 (horizontal) -->
<rect x="493" y="102.3" width="38" height="2.6"/>
<path d="M481.2 103.6 L494.6 98.6 L494.6 108.6 Z"/>
<circle cx="538.2" cy="103.6" r="8.6"/>
<!-- arrow 3 (diagonal) -->
<path d="M462 218.4 L430.4 187.4" stroke="#f7941d" stroke-width="2.8"/>
<path d="M421.8 179 L435.3 185.2 L428.3 192.4 Z"/>
<circle cx="463.6" cy="220" r="9"/>
</g>
</svg>
<div class="callout" style="left:31.8px;top:251.6px;width:157.8px;height:68.6px"></div>
<div class="callout" style="left:539.2px;top:86.3px;width:153.2px;height:33.3px"></div>
<div class="callout" style="left:463.6px;top:202.8px;width:126.4px;height:33.8px"></div>
<svg class="abs" style="left:0;top:0" width="900" height="507" viewBox="0 0 900 507"><g fill="#f7941d"><circle cx="111.2" cy="252" r="9.2"/><circle cx="538.2" cy="103.6" r="8.6"/><circle cx="463.6" cy="220" r="9"/></g></svg>
<span class="t" style="left:108.6px;top:244.5px;font-size:10.4px;line-height:13px;font-weight:bold;color:#ffffff;transform:scaleX(0.900);">1</span>
<span class="t" style="left:59.1px;top:259.7px;font-size:10.6px;line-height:13px;font-weight:bold;color:#ffffff;">With the appropriate</span>
<span class="t" style="left:56.8px;top:273.1px;font-size:10.6px;line-height:13px;font-weight:bold;color:#ffffff;transform:scaleX(0.988);">Data Columns added,</span>
<span class="t" style="left:68.2px;top:286.5px;font-size:10.6px;line-height:13px;font-weight:bold;color:#ffffff;">select the parent</span>
<span class="t" style="left:82.1px;top:299.9px;font-size:10.6px;line-height:13px;font-weight:bold;color:#ffffff;transform:scaleX(1.016);">Data Table.</span>
<span class="t" style="left:535.3px;top:97.3px;font-size:10.4px;line-height:13px;font-weight:bold;color:#ffffff;">2</span>
<span class="t" style="left:547.6px;top:89.9px;font-size:10.6px;line-height:13px;font-weight:bold;color:#ffffff;">Click the drop-down for the</span>
<span class="t" style="left:547.6px;top:102.9px;font-size:10.6px;line-height:13px;font-weight:bold;color:#ffffff;">Extract Method property.</span>
<span class="t" style="left:460.5px;top:213.7px;font-size:10.4px;line-height:13px;font-weight:bold;color:#ffffff;">3</span>
<span class="t" style="left:472.0px;top:206.1px;font-size:10.6px;line-height:13px;font-weight:bold;color:#ffffff;transform:scaleX(0.985);">Select the Grid Layout</span>
<span class="t" style="left:472.0px;top:219.1px;font-size:10.6px;line-height:13px;font-weight:bold;color:#ffffff;">option.</span>
<div id="frame"></div>
</body>
</html>
